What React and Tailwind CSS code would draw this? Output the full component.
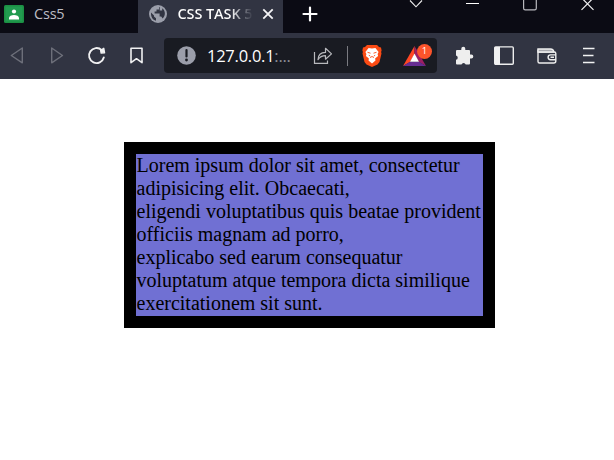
import React from "react";

function Tabs() {
  return (
    <div className="flex h-[33px] bg-[#0b0b14] text-[#eeeef0]">
      <div className="flex h-[28px] w-[138px] items-center pl-1">
        <svg width="20" height="18" viewBox="0 0 20 18" className="shrink-0">
          <rect width="20" height="18" rx="1.5" fill="#1b8f43" />
          <rect x="1.5" y="1.5" width="17" height="15" fill="#229b50" />
          <circle cx="10" cy="6.5" r="2.1" fill="#fff" />
          <path d="M5 14.5v-1.6C5 11 7.5 10 10 10s5 1 5 2.9v1.6z" fill="#fff" />
        </svg>
        <span className="ml-[10px] font-['Open_Sans',sans-serif] text-[14.5px] leading-[20px] tracking-[-0.2px] text-[#bdbdc4]">Css5</span>
      </div>
      <div className="flex w-[145px] bg-[#313442]">
        <div className="flex h-[28px] w-full items-center pl-[11px]">
          <svg width="18" height="18" viewBox="0 0 18 18" className="shrink-0">
            <circle cx="9" cy="9" r="9" fill="#9b9eaa" />
            <path d="M2 7.6 5 10.5v1l2 1.8v2.5C3.700 15 1.700 12 2 7.600zM10 2v2.500H7.500v2H5.600v2h5v3h1.600l1.500 2c3-3 3-7.500-.5-10.300V5.600h-2.500V2.200z" fill="#313442" />
          </svg>
          <span className="ml-[10.5px] w-[75.5px] shrink-0 overflow-hidden whitespace-nowrap bg-linear-to-r from-white from-70% to-[#313442] to-100% bg-clip-text font-['Open_Sans',sans-serif] text-[14.5px] leading-[20px] font-semibold tracking-[-0.1px] text-transparent">CSS TASK 5</span>
          <svg width="12" height="12" viewBox="0 0 12 12" className="ml-[9px] shrink-0" stroke="#f5f5f7" strokeWidth="1.8">
            <path d="M1.300 1.300l9.400 9.400M10.700 1.300l-9.400 9.400" />
          </svg>
        </div>
      </div>
      <svg width="16" height="16" viewBox="0 0 16 16" className="mt-[6px] ml-[19px] shrink-0" stroke="#fff" strokeWidth="2.200" strokeLinecap="round">
        <path d="M8 1.500v13M1.500 8h13" />
      </svg>
      <svg width="14" height="8" viewBox="0 0 14 8" className="ml-[91px] shrink-0" fill="none" stroke="#eee" strokeWidth="1.100">
        <path d="M1 .5l6 6.300L13 .5" />
      </svg>
      <svg width="14" height="8" viewBox="0 0 14 8" className="ml-[43px] shrink-0">
        <path d="M0 3h13v1H0z" fill="#fff" />
      </svg>
      <svg width="14" height="11" viewBox="0 0 14 11" className="ml-[43px] shrink-0" fill="none" stroke="#b9b9be" strokeWidth="1.200">
        <path d="M.6-2v10.200q0 1.600 1.600 1.600h9.500q1.600 0 1.600-1.600V-2" />
      </svg>
      <svg width="14" height="11" viewBox="0 0 14 11" className="ml-[44px] shrink-0" stroke="#f1f1f2" strokeWidth="1.200">
        <path d="M.5 9.800L12.500-2.200M12.500 9.800L.5-2.200" />
      </svg>
    </div>
  );
}

function AddressBar() {
  return (
    <div className="ml-[17px] flex h-[35px] w-[273px] shrink-0 items-center rounded-[4px] bg-[#191b22] pl-[13px]">
      <svg width="19" height="19" viewBox="0 0 19 19" className="shrink-0">
        <circle cx="9.500" cy="9.500" r="9.300" fill="#9b9eaa" />
        <path d="M9.500 4v6.500" stroke="#191b22" strokeWidth="2.200" strokeLinecap="round" />
        <circle cx="9.500" cy="14" r="1.400" fill="#191b22" />
      </svg>
      <span className="ml-[11px] w-[95px] shrink-0 whitespace-nowrap font-['Open_Sans',sans-serif] text-[16.500px] leading-[22px] tracking-[-0.250px] text-white">
        127.0.0.1<span className="text-[#8d8f97]">:...</span>
      </span>
      <svg width="20" height="18" viewBox="0 0 20 18" className="ml-[11px] shrink-0" fill="none" stroke="#b8b9bd" strokeWidth="1.200">
        <path d="M1.500 5v11.400h13v-3" />
        <path d="M5 12.700c.2-5 3-7.300 7.500-7.300V1.300l6 5.600-6 5.300V8.700C9 8.700 6.700 10 5 12.700z" strokeLinejoin="round" />
      </svg>
      <span className="ml-[14px] h-[20px] w-px shrink-0 bg-[#7a7b81]" />
      <svg width="20" height="24" viewBox="0 0 20 24" className="ml-[14px] shrink-0">
        <path d="M5 1h10l2 2 2 .5.6 3-.5 1.500.4 1.500-2 8.500-2 2.500L10 23l-5.500-2.500-2-2.500L.5 9.500.9 8 .4 6.500l.6-3L3 3z" fill="#fb4b14" />
        <path d="M10 4.500l3.400-.6 3.200 4-1 2.200.5 1.800-3 2.600.4 2-3.500 3-3.500-3 .4-2-3-2.600.5-1.800-1-2.200 3.200-4z" fill="#fff" />
        <path d="M5.500 8.300l3 .9M14.500 8.300l-3 .9M8 13.500l2-1 2 1M6.800 11.300l1.300.6M13.200 11.300l-1.300.6" stroke="#fb4b14" strokeWidth=".9" fill="none" />
      </svg>
      <div className="relative ml-[21px] h-[20px] w-[23px] shrink-0">
        <svg width="23" height="20" viewBox="0 0 23 20">
          <path d="M11.500 0L0 20l7-4 4.500-8z" fill="#ff4724" />
          <path d="M11.500 0L23 20l-7-4-4.500-8z" fill="#9e1f63" />
          <path d="M0 20h23l-7-4.200H7z" fill="#662d91" />
          <path d="M11.500 7.500L7 15.800h9z" fill="#fff" />
        </svg>
        <span className="absolute top-[-2px] left-[14px] flex size-[15px] items-center justify-center rounded-full bg-[#fb542b] font-['Open_Sans',sans-serif] text-[9.500px] leading-none text-white">1</span>
      </div>
    </div>
  );
}

function Toolbar() {
  return (
    <div className="flex h-[46px] items-center bg-[#313442] pb-px pl-[7px]">
      <div className="flex shrink-0 gap-5">
        <svg width="20" height="20" viewBox="0 0 20 20" fill="none" stroke="#6d6f7a" strokeWidth="1.400" strokeLinejoin="round">
          <path d="M15.300 2v14.800L4.300 9.500z" />
        </svg>
        <svg width="20" height="20" viewBox="0 0 20 20" fill="none" stroke="#6d6f7a" strokeWidth="1.400" strokeLinejoin="round">
          <path d="M4.700 2v14.800L15.500 9.500z" />
        </svg>
        <svg width="20" height="20" viewBox="0 0 20 20" fill="none" stroke="#f1f1f2" strokeWidth="1.900" strokeLinecap="round">
          <path d="M16.800 11.500A7.500 7.500 0 1 1 14.700 4.100" />
          <path d="M13.600 4.300l3.200-2 .8 4.500-3.500.3z" fill="#f1f1f2" strokeWidth="1.300" strokeLinejoin="round" />
        </svg>
        <svg width="20" height="20" viewBox="0 0 20 20" fill="none" stroke="#f1f1f2" strokeWidth="1.600" strokeLinejoin="round">
          <path d="M4 2.200h11v14.500l-5.500-4-5.500 4z" />
        </svg>
      </div>
      <AddressBar />
      <svg width="20" height="20" viewBox="0 0 20 20" className="ml-[18px] shrink-0">
        <path d="M6.300 2.800a2 2 0 0 1 4 0V4H14q1 0 1 1v3.600h1.300a2 2 0 0 1 0 4H15v4.900q0 1-1 1h-3.300a2.200 2.200 0 0 0-4.200 0H2q-1 0-1-1v-3.700a2.200 2.200 0 0 0 0-4.300V5q0-1 1-1h4.300z" fill="#eee" />
      </svg>
      <svg width="20" height="20" viewBox="0 0 20 20" className="ml-[19px] shrink-0">
        <rect x=".7" y=".9" width="18.600" height="17.400" rx="1" fill="none" stroke="#eee" strokeWidth="1.400" />
        <path d="M1 1h5v17H1z" fill="#f1f1f2" />
      </svg>
      <svg width="20" height="20" viewBox="0 0 20 20" className="ml-[23px] shrink-0" fill="none" stroke="#eee" strokeWidth="1.400">
        <path d="M1 3.500v12q0 1.500 1.500 1.500h14.300q2 0 2-2V7.500q0-1.500-1.500-1.500H1" />
        <path d="M1 3h12.500q3 0 3.300 3H1z" fill="#a6a7ad" />
        <path d="M19 8.900h-5.500a2.300 2.300 0 0 0 0 4.800H19M13.500 11.300H17" />
      </svg>
      <svg width="12" height="18" viewBox="0 0 12 18" className="ml-[26px] shrink-0" stroke="#f1f1f2" strokeWidth="1.600">
        <path d="M0 1.500h11.500M0 8.500h10.500M0 15.500h11.500" />
      </svg>
    </div>
  );
}

export default function App() {
  return (
    <div className="flex h-[460px] w-[614px] flex-col overflow-hidden bg-white">
      <Tabs />
      <Toolbar />
      <main className="flex-1 pt-[63px] pl-[124px]">
        <div className="h-[186px] w-[371px] border-[12px] border-black bg-[#7070d3] pl-[0.5px] font-['Liberation_Serif',serif] text-[20px] leading-[23px] whitespace-nowrap text-black">
          Lorem ipsum dolor sit amet, consectetur<br />
          adipisicing elit. Obcaecati,<br />
          eligendi voluptatibus quis beatae provident<br />
          officiis magnam ad porro,<br />
          explicabo sed earum consequatur<br />
          voluptatum atque tempora dicta similique<br />
          exercitationem sit sunt.
        </div>
      </main>
    </div>
  );
}
